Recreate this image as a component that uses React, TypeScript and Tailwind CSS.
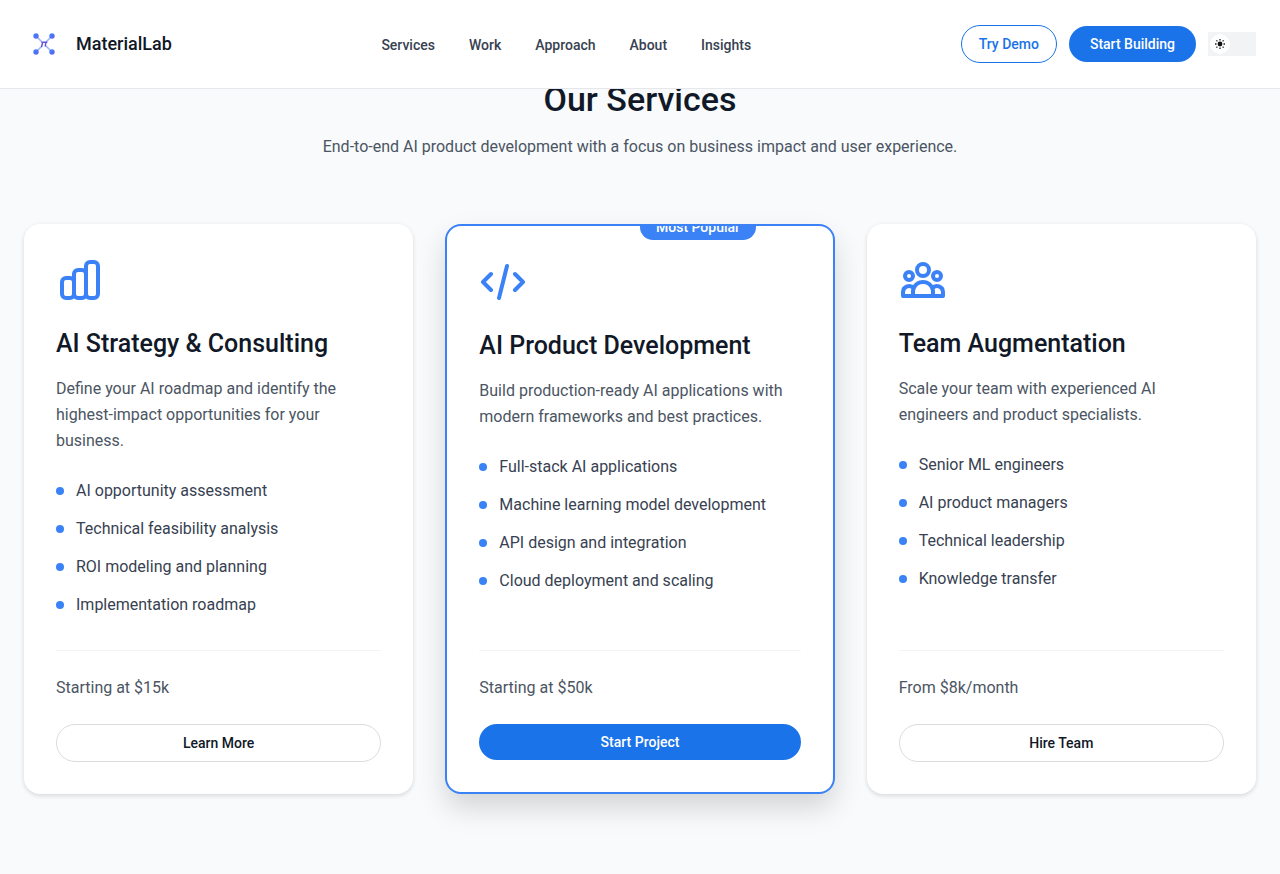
import type { ReactNode } from 'react';

type Service = {
  title: string;
  description: string;
  features: string[];
  price: string;
  action: string;
  icon: string;
  featured?: boolean;
};

const services: Service[] = [
  {
    title: 'AI Strategy & Consulting',
    description: 'Define your AI roadmap and identify the highest-impact opportunities for your business.',
    features: ['AI opportunity assessment', 'Technical feasibility analysis', 'ROI modeling and planning', 'Implementation roadmap'],
    price: 'Starting at $15k',
    action: 'Learn More',
    icon: 'M9 19v-6a2 2 0 00-2-2H5a2 2 0 00-2 2v6a2 2 0 002 2h2a2 2 0 002-2zm0 0V9a2 2 0 012-2h2a2 2 0 012 2v10m-6 0a2 2 0 002 2h2a2 2 0 002-2m0 0V5a2 2 0 012-2h2a2 2 0 012 2v14a2 2 0 01-2 2h-2a2 2 0 01-2-2z',
  },
  {
    title: 'AI Product Development',
    description: 'Build production-ready AI applications with modern frameworks and best practices.',
    features: ['Full-stack AI applications', 'Machine learning model development', 'API design and integration', 'Cloud deployment and scaling'],
    price: 'Starting at $50k',
    action: 'Start Project',
    icon: 'M10 20l4-16m4 4l4 4-4 4M6 16l-4-4 4-4',
    featured: true,
  },
  {
    title: 'Team Augmentation',
    description: 'Scale your team with experienced AI engineers and product specialists.',
    features: ['Senior ML engineers', 'AI product managers', 'Technical leadership', 'Knowledge transfer'],
    price: 'From $8k/month',
    action: 'Hire Team',
    icon: 'M17 20h5v-2a3 3 0 00-5.356-1.857M17 20H7m10 0v-2c0-.656-.126-1.283-.356-1.857M7 20H2v-2a3 3 0 015.356-1.857M7 20v-2c0-.656.126-1.283.356-1.857m0 0a5.002 5.002 0 019.288 0M15 7a3 3 0 11-6 0 3 3 0 016 0zm6 3a2 2 0 11-4 0 2 2 0 014 0zM7 10a2 2 0 11-4 0 2 2 0 014 0z',
  },
];

const navItems = ['Services', 'Work', 'Approach', 'About', 'Insights'];

function Logo() {
  return (
    <svg className="size-10" viewBox="0 0 40 40" fill="none" aria-hidden="true">
      <defs>
        <linearGradient id="node" x1="0" y1="0" x2="1" y2="1">
          <stop offset="0.2" stopColor="#3b82f6" />
          <stop offset="1" stopColor="#6d5bea" />
        </linearGradient>
      </defs>
      <path d="M12 12l6 6M28 12l-6 6M12 28l6-6M28 28l-6-6" stroke="#9bb2fa" strokeWidth="1.5" />
      <g fill="url(#node)">
        <circle cx="12" cy="12" r="2.7" />
        <circle cx="28" cy="12" r="2.7" />
        <circle cx="12" cy="28" r="2.7" />
        <circle cx="28" cy="28" r="2.7" />
      </g>
      <path d="M17.6 22.5l1-4M18 18.300h4.800M21.800 18.500l-.5 3.500" stroke="#6554d9" strokeWidth="1.500" strokeLinecap="round" />
    </svg>
  );
}

function Header() {
  return (
    <header className="relative z-10 flex h-[89px] items-center justify-between border-b border-[#e5e7eb] bg-white px-6">
      <a href="#" className="flex items-center gap-3 text-lg font-medium text-[#111827]">
        <Logo />
        MaterialLab
      </a>
      <nav className="flex items-center gap-[34px] pt-px text-sm font-medium text-[#374151]">
        {navItems.map((item) => (
          <a key={item} href="#">{item}</a>
        ))}
      </nav>
      <div className="flex items-center gap-3 text-sm font-medium">
        <button className="h-[38px] rounded-full border border-[#1a73e8] px-[17px] text-[#1a73e8]">Try Demo</button>
        <button className="h-9 rounded-full bg-[#1a73e8] px-[21px] text-white">Start Building</button>
        <button aria-label="Toggle theme" className="flex h-6 w-12 items-center bg-[#f1f3f4] px-0.5">
          <span className="flex size-5 items-center justify-center rounded-full bg-white">
            <svg className="size-3" viewBox="0 0 12 12" fill="none" aria-hidden="true">
              <circle cx="6" cy="6" r="2.400" fill="#111" />
              <path d="M6 1v1.500M6 9.500V11M1 6h1.500M9.500 6H11M2.400 2.400l1 1M8.600 8.600l1 1M2.400 9.600l1-1M8.600 3.400l1-1" stroke="#222" strokeWidth="1.300" />
            </svg>
          </span>
        </button>
      </div>
    </header>
  );
}

function Bullet({ children }: { children: ReactNode }) {
  return (
    <li className="flex items-center gap-3">
      <span className="size-2 rounded-full bg-[#3b82f6]" />
      {children}
    </li>
  );
}

function ServiceCard({ service }: { service: Service }) {
  return (
    <article
      className={
        service.featured
          ? 'relative flex flex-col overflow-hidden rounded-2xl border-2 border-[#3b82f6] bg-white p-8 shadow-[0_14px_28px_rgba(0,0,0,0.15)]'
          : 'flex flex-col rounded-2xl bg-white p-8 shadow-[0_2px_4px_rgba(0,0,0,0.1),0_1px_6px_rgba(0,0,0,0.04)]'
      }
    >
      {service.featured && (
        <span className="absolute -top-3 left-1/2 rounded-full bg-[#3b82f6] px-4 py-[3px] text-sm font-medium text-white">
          Most Popular
        </span>
      )}
      <svg className="size-12 text-[#3b82f6]" viewBox="0 0 24 24" fill="none" stroke="currentColor" strokeWidth="2" strokeLinecap="round" strokeLinejoin="round" aria-hidden="true">
        <path d={service.icon} />
      </svg>
      <h3 className="mt-6 text-[25px] leading-8 font-medium text-[#111827]">{service.title}</h3>
      <p className="mt-4 leading-[26px] text-[#4b5563]">{service.description}</p>
      <ul className="mt-6 mb-8 flex flex-col gap-3 leading-[26px] text-[#374151]">
        {service.features.map((feature) => (
          <Bullet key={feature}>{feature}</Bullet>
        ))}
      </ul>
      <div className="mt-auto border-t border-[#f3f4f6] pt-6">
        <p className="mb-6 leading-[25px] text-[#4b5563]">{service.price}</p>
        <button
          className={
            service.featured
              ? 'block h-9 w-full rounded-full bg-[#1a73e8] text-sm font-medium text-white'
              : 'block h-[38px] w-full rounded-full border border-[#dadce0] text-sm font-medium text-[#111827]'
          }
        >
          {service.action}
        </button>
      </div>
    </article>
  );
}

export default function App() {
  return (
    <div className="min-h-screen bg-[#f9fafb] font-['Roboto',sans-serif]">
      <Header />
      <main className="-mt-3 bg-[#f8fafc] px-6 pb-20">
        <div className="text-center">
          <h2 className="text-[34px] leading-[44px] font-medium text-[#111827]">Our Services</h2>
          <p className="mt-[13px] leading-[26px] text-[#4b5563]">
            End-to-end AI product development with a focus on business impact and user experience.
          </p>
        </div>
        <section className="mt-16 grid grid-cols-3 gap-8">
          {services.map((service) => (
            <ServiceCard key={service.title} service={service} />
          ))}
        </section>
      </main>
    </div>
  );
}
